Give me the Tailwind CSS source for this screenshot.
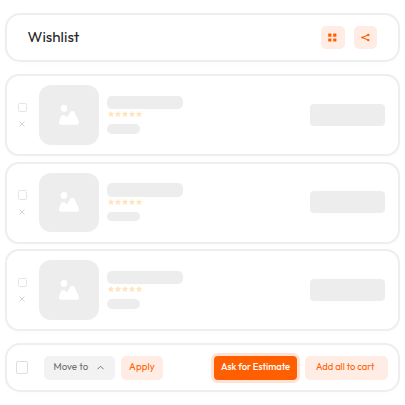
<!DOCTYPE html>
<html lang="en">
<head>
<meta charset="utf-8">
<title>Wishlist</title>
<script src="https://cdn.jsdelivr.net/npm/@tailwindcss/browser@4"></script>
</head>
<body class="bg-white">
<svg class="hidden">
  <symbol id="star" viewBox="0 0 10 10"><path d="M5 .3 6.5 3.2 9.8 3.7 7.4 6 8 9.4 5 7.8 2 9.4 2.6 6 .2 3.7 3.5 3.2Z" fill="#ffe4bd" stroke="#ffe4bd" stroke-width=".5" stroke-linejoin="round"/></symbol>
</svg>
<main class="flex h-[405px] w-[405px] flex-col pl-[5px] pr-[5px] pt-[13px] font-['Outfit','Lato',sans-serif]">
  <header class="flex h-[49px] w-[395px] shrink-0 items-center rounded-[15px] border-2 border-[#eeeeee] bg-white pl-[20.5px] pr-[21px] shadow-[0_2px_6px_rgba(0,0,0,0.015)]">
    <h1 class="mb-[2px] flex-1 text-[15.2px] font-normal leading-5 text-[#262626]">Wishlist</h1>
    <div class="flex gap-[9px]">
      <button aria-label="Grid view" class="flex size-[23.5px] items-center justify-center rounded-[5px] bg-[#ffece4]">
        <svg class="size-[9px]" viewBox="0 0 9 9" fill="#ff5f00"><rect x=".2" y=".6" width="3.2" height="3.2" rx=".3"/><rect x="5.2" y=".6" width="3.2" height="3.2" rx=".3"/><rect x=".2" y="5.4" width="3.2" height="3.2" rx=".3"/><rect x="5.2" y="5.4" width="3.2" height="3.2" rx=".3"/></svg>
      </button>
      <button aria-label="Share" class="flex size-[23.5px] items-center justify-center rounded-[5px] bg-[#ffece4]">
        <svg class="size-[9px]" viewBox="0 0 9 9" fill="#ff5f00"><path d="M7.2 1.9 1.2 4.5 7.2 7.1" fill="none" stroke="#ff5f00" stroke-width="1.1"/><circle cx="7.3" cy="1.9" r="1.2"/><circle cx="1.4" cy="4.5" r="1.1"/><circle cx="7.3" cy="7.1" r="1.2"/></svg>
      </button>
    </div>
  </header>

  <section id="items" class="mt-[12px] flex flex-col gap-[5.5px]">
    <template id="item">
      <article class="flex h-[82px] w-[395px] shrink-0 items-center rounded-[14px] border-2 border-[#eeeeee] bg-white pb-[0.5px] pl-[10.5px] pr-[13px] shadow-[0_2px_6px_rgba(0,0,0,0.015)]">
        <div class="flex w-[9.5px] flex-col items-center gap-[9px]">
          <span class="size-[9.5px] rounded-[1.5px] border border-[#e4e4e4]"></span>
          <svg class="size-[6px]" viewBox="0 0 6 6" stroke="#d4d4d4" stroke-width="1"><path d="M.5.5 5.5 5.5M5.5.5.5 5.5"/></svg>
        </div>
        <div class="ml-[12px] flex size-[59.5px] shrink-0 items-center justify-center rounded-[12px] bg-[#ededed]">
          <svg class="size-[20px]" viewBox="0 0 20 20" fill="white"><circle cx="5" cy="3.4" r="3.3"/><path d="M2.8 19.8C.6 19.8-.4 18.4.1 16.4L1.6 12C2.4 9.7 4.8 9.2 6.4 10.9L8 12.3 11 7.6C12.3 5.5 14.7 5.6 15.8 7.8L19.6 16C20.4 18.2 19.4 19.8 17.1 19.8Z"/></svg>
        </div>
        <div class="ml-[8.5px] flex flex-1 flex-col">
          <span class="h-[13.5px] w-[75.5px] rounded-[5px] bg-[#ededed]"></span>
          <span class="mt-[2px] flex gap-[1.2px] pl-[0.5px]">
            <svg class="size-[6px]"><use href="#star"/></svg><svg class="size-[6px]"><use href="#star"/></svg><svg class="size-[6px]"><use href="#star"/></svg><svg class="size-[6px]"><use href="#star"/></svg><svg class="size-[6px]"><use href="#star"/></svg>
          </span>
          <span class="mt-[7px] h-[9.5px] w-[33px] rounded-[5px] bg-[#ededed]"></span>
        </div>
        <span class="h-[22px] w-[75.5px] rounded-[4px] bg-[#ededed]"></span>
      </article>
    </template>
  </section>

  <footer class="mt-[12px] flex h-[49px] w-[395px] shrink-0 items-center rounded-[15px] border-2 border-[#eeeeee] bg-white pl-[8.5px] pr-[10px] text-[9.4px] leading-3 shadow-[0_2px_6px_rgba(0,0,0,0.015)]">
    <span class="size-[12.5px] rounded-[2px] border border-[#dedede]"></span>
    <button class="ml-[16px] flex h-[24px] w-[71px] items-center justify-between rounded-[5px] bg-[#f2f2f2] pb-px pl-[9.5px] pr-[11px] text-[9.7px] text-[#707070]">
      <span class="whitespace-nowrap tracking-[0.05px]">Move to</span>
      <svg class="h-[5px] w-[7px]" viewBox="0 0 7 5" fill="none" stroke="#777" stroke-width="1" stroke-linecap="round"><path d="M.7 4 3.5 1.2 6.3 4"/></svg>
    </button>
    <button class="ml-[6px] h-[24px] w-[42px] rounded-[5px] bg-[#ffece4] pb-px tracking-[0.15px] text-[9.7px] text-[#ff5f00]">Apply</button>
    <div class="ml-auto flex gap-[7.5px]">
      <button class="h-[24px] w-[83px] whitespace-nowrap rounded-[4px] bg-[#ff5f00] pb-px font-medium text-white ring-3 ring-[#ffe2d3]">Ask for Estimate</button>
      <button class="h-[24px] w-[83.5px] whitespace-nowrap rounded-[5px] bg-[#ffece4] pb-px pr-[2px] text-[#ff5f00]">Add all to cart</button>
    </div>
  </footer>
</main>
<script>
  const list = document.getElementById('items');
  const item = document.getElementById('item');
  for (let i = 0; i < 3; i++) list.appendChild(item.content.cloneNode(true));
  document.querySelectorAll('use').forEach(u => u.parentNode.setAttribute('viewBox', '0 0 10 10'));
</script>
</body>
</html>
